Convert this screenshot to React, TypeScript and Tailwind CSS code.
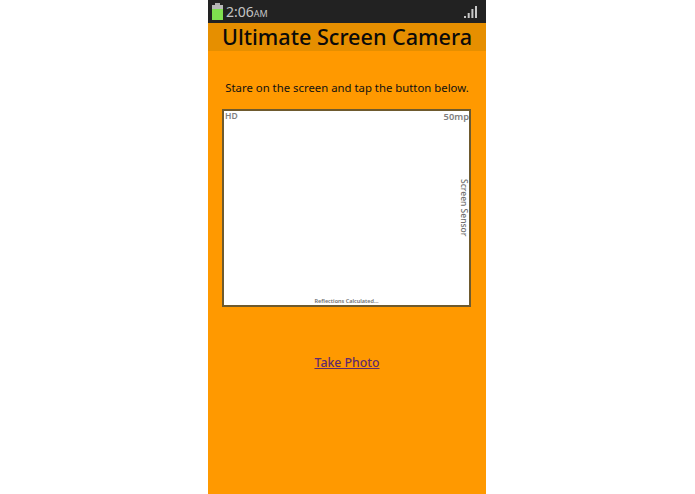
export default function App() {
  const font = { fontFamily: '"Noto Sans", sans-serif' };
  return (
    <div className="flex h-[494px] w-[695px] bg-white pl-[208px]" style={font}>
      <div className="flex h-full w-[278px] flex-col items-center bg-[#ff9900]">
        <div className="flex h-[23px] w-full items-center justify-between bg-[#222222] pl-[4px] pr-[9px]">
          <div className="flex items-center gap-[3px]">
            <svg width="11" height="17" viewBox="0 0 11 17">
              <rect x="3" y="0" width="5" height="2" fill="#b0b0b0" />
              <rect x="0" y="2" width="11" height="4" fill="#b8b8b8" />
              <rect x="0" y="6" width="11" height="11" fill="#7fe04f" />
            </svg>
            <span className="text-[14px] leading-none text-[#c4c4c4]">
              2:06<span className="text-[9px]">AM</span>
            </span>
          </div>
          <svg width="13" height="12" viewBox="0 0 13 12">
            <rect x="0" y="10" width="2" height="2" fill="#c8c8c8" />
            <rect x="3.7" y="7" width="2" height="5" fill="#c8c8c8" />
            <rect x="7.4" y="3" width="2" height="9" fill="#c8c8c8" />
            <rect x="11" y="0" width="2" height="12" fill="#c8c8c8" />
          </svg>
        </div>
        <div className="flex h-[28px] w-full items-center justify-center bg-[#e68f00]">
          <h1 className="text-[21.6px] font-medium leading-none text-[#0a0a0a]">Ultimate Screen Camera</h1>
        </div>
        <p className="mt-[29px] text-[11.35px] leading-[16px] text-[#111111]">Stare on the screen and tap the button below.</p>
        <div className="relative mt-[13px] ml-[-1px] h-[198px] w-[249px] border-2 border-[#6e5a2e] bg-white">
          <span className="absolute left-[1px] top-[-1px] text-[8.5px] font-semibold leading-[11px] text-[#808080]">HD</span>
          <span className="absolute right-[0px] top-[0px] text-[9.3px] font-semibold leading-[12px] text-[#808080]">50mp</span>
          <span className="absolute right-[-1px] top-[68px] text-[8.5px] font-medium leading-[11px] text-[#707070] [writing-mode:vertical-rl]">Screen Sensor</span>
          <span className="absolute bottom-[0px] left-0 right-0 text-center text-[5.5px] font-semibold leading-[8px] text-[#707070]">Reflections Calculated...</span>
        </div>
        <a href="#" className="mt-[47px] text-[12.3px] font-medium leading-[18px] text-[#5f2a6e] underline">Take Photo</a>
      </div>
    </div>
  );
}
